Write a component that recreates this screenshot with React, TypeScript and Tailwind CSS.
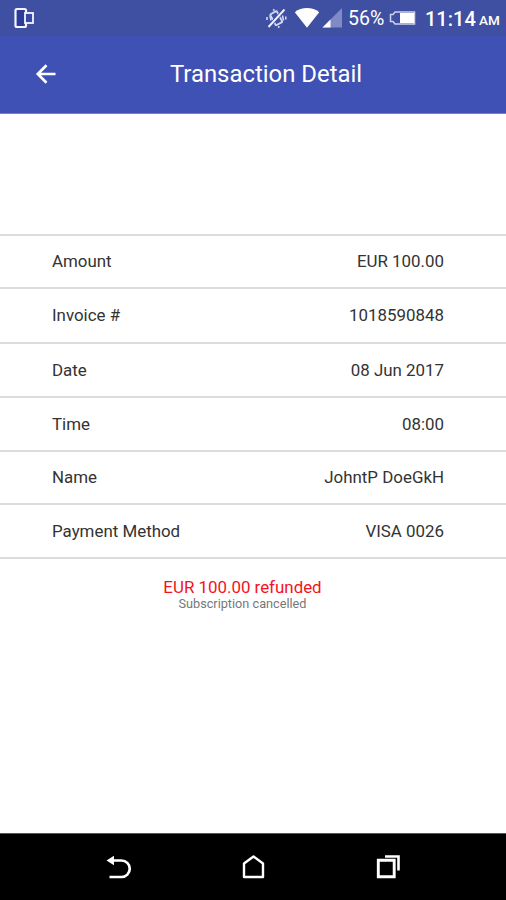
import clsx from 'clsx';

const rows = [
  { label: 'Amount', value: 'EUR 100.00', height: 'h-[53px]' },
  { label: 'Invoice #', value: '1018590848', height: 'h-[55px]' },
  { label: 'Date', value: '08 Jun 2017', height: 'h-[54px]' },
  { label: 'Time', value: '08:00', height: 'h-[54px]' },
  { label: 'Name', value: 'JohntP DoeGkH', height: 'h-[53px]' },
  { label: 'Payment Method', value: 'VISA 0026', height: 'h-[54px]' },
];

function StatusBar() {
  return (
    <div className="flex h-9 items-center bg-[#3f4fa2] pr-[6px] pl-[14px] text-white">
      <svg width="21" height="22" viewBox="0 0 21 22" fill="none" stroke="#f4f5ff" strokeWidth="2.2">
        <path d="M12 6V3.500Q12 2 10.500 2H3Q1.500 2 1.500 3.500v15Q1.500 20 3 20h7.500Q12 20 12 18.500V16" fill="#2c3a98" />
        <rect x="11" y="6" width="8" height="10" fill="#3a49a5" strokeWidth="1.800" />
      </svg>

      <div className="ml-auto flex items-center">
        {/* vibración desactivada */}
        <svg width="22" height="22" viewBox="0 0 22 22" fill="none" stroke="#d3d8f2" strokeWidth="1.900">
          <rect x="7.500" y="5" width="7.500" height="12.500" rx="1" transform="rotate(-28 11.2 11.2)" />
          <path d="M5 8.500l1 5M17.500 8.500l1 5M2 10v3M20.800 9.500v3M8 2.500l1.500 1M13 19.500l1.500 1" strokeWidth="1.600" />
          <path d="M19.500 2.500L3.500 20" stroke="#3f4fa2" strokeWidth="3.600" />
          <path d="M19.500 2.500L3.500 20" stroke="#eef0fb" strokeWidth="1.900" />
        </svg>
        <svg className="ml-[7px]" width="26" height="22" viewBox="0 0 26 22" fill="#fff">
          <path d="M.8 5.200C7.500-.4 18.500-.4 25.200 5.200L13 20.800z" />
        </svg>
        <svg className="ml-[2px]" width="21" height="22" viewBox="0 0 21 22">
          <path d="M20 1v19.500H.5z" fill="#7f8ac7" />
          <path d="M8.500 12.500v8H.5z" fill="#fff" />
        </svg>
        <span className="mt-[2px] ml-[5px] w-[37px] text-[19.500px] leading-none whitespace-nowrap">56%</span>
        <svg className="ml-[4px]" width="28" height="16" viewBox="0 0 28 16" fill="none">
          <path d="M6 2h19.500v12H6L4 11.500H1.500v-7H4z" stroke="#cdd2ed" strokeWidth="1.500" />
          <path d="M11 3h14v10H11z" fill="#fff" />
        </svg>
        <span className="mt-[2px] ml-[8px] w-[51px] text-[20px] leading-none font-medium whitespace-nowrap">11:14</span>
        <span className="mt-[6px] ml-[3px] w-[21px] text-[13.500px] leading-none font-medium">AM</span>
      </div>
    </div>
  );
}

function Header() {
  return (
    <header className="relative flex h-[78px] items-center justify-center border-b border-[#7780c4] bg-[#3f51b5] pl-[26px] text-white">
      <svg className="absolute top-[28px] left-[35px]" width="22" height="20" viewBox="0 0 22 20" fill="none" stroke="#fff" strokeWidth="2.700">
        <path d="M20.500 10H3M11.500 1.300L2.800 10l8.700 8.700" />
      </svg>
      <h1 className="text-[23.900px] leading-none whitespace-nowrap">Transaction Detail</h1>
    </header>
  );
}

function NavigationBar() {
  return (
    <nav className="flex h-[67px] items-center justify-between border-t border-[#555] bg-black pr-[104px] pl-[105px]">
      <svg width="27" height="26" viewBox="0 0 27 26" fill="none" stroke="#fff" strokeWidth="2.700">
        <path d="M7 6.500h9.500a8 8 0 0 1 0 16.500H4.500" />
        <path d="M1.500 6.500L9 1.800v9.400z" fill="#fff" stroke="none" />
      </svg>
      <svg width="24" height="26" viewBox="0 0 24 26" fill="none" stroke="#fff" strokeWidth="2.400">
        <path d="M2 9.500L11.500 2.500l9.500 7v13.500H2z" strokeLinejoin="round" />
      </svg>
      <svg width="27" height="26" viewBox="0 0 27 26" fill="none" stroke="#fff">
        <path d="M3.300 6.300h15.900v16.400H3.300z" strokeWidth="2.900" />
        <path d="M10 2.500h13.500V16.500" strokeWidth="2.600" />
      </svg>
    </nav>
  );
}

export default function App() {
  return (
    <div className="flex h-[900px] w-[506px] flex-col overflow-hidden bg-white font-[Roboto,sans-serif]">
      <StatusBar />
      <Header />

      <main className="flex-1 pt-[120px]">
        <div className="border-t-2 border-[#dcdcdc]">
          {rows.map((row) => (
            <div
              key={row.label}
              className={clsx(
                'flex items-center justify-between border-b-2 border-[#dcdcdc] pt-px pr-[62px] pl-[52px] text-[16.900px] text-[#333]',
                row.height,
              )}
            >
              <span>{row.label}</span>
              <span>{row.value}</span>
            </div>
          ))}
        </div>

        <div className="pt-[18px] pr-[21px] text-center">
          <p className="text-[16.900px] leading-[20px] text-[#f5121d]">EUR 100.00 refunded</p>
          <p className="text-[12.700px] leading-[14px] text-[#777]">Subscription cancelled</p>
        </div>
      </main>

      <NavigationBar />
    </div>
  );
}
